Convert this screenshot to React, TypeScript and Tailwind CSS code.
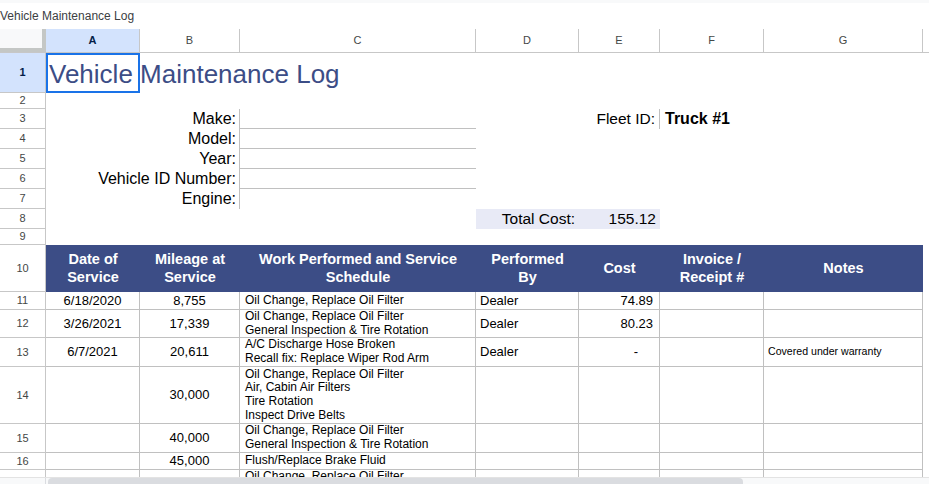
const font = { fontFamily: '"Liberation Sans", Arial, sans-serif' }

const colW = ['w-[94px]', 'w-[100px]', 'w-[236px]', 'w-[103px]', 'w-[81px]', 'w-[104px]', 'w-[159px]']
const letters = ['A', 'B', 'C', 'D', 'E', 'F', 'G']

interface LogRow {
  n: number
  h: string
  date?: string
  miles?: string
  work: string[]
  by?: string
  cost?: string
  notes?: string
}

const rows: LogRow[] = [
  { n: 11, h: 'h-[18px]', date: '6/18/2020', miles: '8,755', work: ['Oil Change, Replace Oil Filter'], by: 'Dealer', cost: '74.89' },
  {
    n: 12,
    h: 'h-[28px]',
    date: '3/26/2021',
    miles: '17,339',
    work: ['Oil Change, Replace Oil Filter', 'General Inspection & Tire Rotation'],
    by: 'Dealer',
    cost: '80.23'
  },
  {
    n: 13,
    h: 'h-[29px]',
    date: '6/7/2021',
    miles: '20,611',
    work: ['A/C Discharge Hose Broken', 'Recall fix: Replace Wiper Rod Arm'],
    by: 'Dealer',
    cost: '-',
    notes: 'Covered under warranty'
  },
  {
    n: 14,
    h: 'h-[57px]',
    miles: '30,000',
    work: ['Oil Change, Replace Oil Filter', 'Air, Cabin Air Filters', 'Tire Rotation', 'Inspect Drive Belts']
  },
  { n: 15, h: 'h-[29px]', miles: '40,000', work: ['Oil Change, Replace Oil Filter', 'General Inspection & Tire Rotation'] },
  { n: 16, h: 'h-[17px]', miles: '45,000', work: ['Flush/Replace Brake Fluid'] },
  { n: 17, h: 'h-[29px]', work: ['Oil Change, Replace Oil Filter', 'General Inspection & Tire Rotation'] }
]

function RowHead({ n, selected }: { n: number; selected?: boolean }) {
  return (
    <div
      className={
        selected
          ? 'flex w-[46px] shrink-0 items-center justify-center border-r border-b border-[#c7c7c7] bg-[#d3e3fd] text-[11px] font-bold text-[#041e49]'
          : 'flex w-[46px] shrink-0 items-center justify-center border-r border-b border-[#c7c7c7] bg-white text-[11px] text-[#444746]'
      }>
      {n}
    </div>
  )
}

function LabelRow({ n, label, underline, fleet }: { n: number; label: string; underline: boolean; fleet?: boolean }) {
  return (
    <div className="flex h-[20px]">
      <RowHead n={n} />
      <div className="flex w-[194px] items-center justify-end border-r border-[#c0c0c0] pr-[3px] text-[16px] text-black">
        {label}
      </div>
      <div className={underline ? 'w-[236px] border-b border-[#c0c0c0]' : 'w-[236px]'} />
      {fleet ? (
        <>
          <div className="flex w-[184px] items-center justify-end border-r border-[#c0c0c0] pr-[4px] text-[15.5px] text-black">
            Fleet ID:
          </div>
          <div className="flex items-center pl-[5px] text-[16px] font-bold text-black">Truck #1</div>
        </>
      ) : null}
    </div>
  )
}

export default function App() {
  return (
    <div className="h-[484px] w-[929px] overflow-hidden bg-white" style={font}>
      {/* title bar */}
      <div className="flex h-[29px] items-center border-t-[3px] border-[#f8f9fa] text-[12px] text-[#3c4043]">
        Vehicle Maintenance Log
      </div>

      {/* column letters */}
      <div className="flex h-[24px] border-b border-[#c7c7c7]">
        <div className="w-[46px] shrink-0 border-r-4 border-b-4 border-[#c4c7c5] bg-[#f8f9fa]" />
        {letters.map((l, i) => (
          <div
            key={l}
            className={
              i === 0
                ? `${colW[i]} flex shrink-0 items-center justify-center border-r border-[#c7c7c7] bg-[#d3e3fd] text-[11px] font-bold text-[#041e49]`
                : `${colW[i]} flex shrink-0 items-center justify-center border-r border-[#c7c7c7] text-[11px] text-[#444746]`
            }>
            {l}
          </div>
        ))}
        <div className="flex-1" />
      </div>

      <div className="h-[424px] overflow-hidden">
        {/* row 1 */}
        <div className="flex h-[40px]">
          <RowHead n={1} selected />
          <div className="flex w-[94px] shrink-0 items-center overflow-visible border-2 border-[#1a73e8] pt-[2px] pl-[1px]">
            <span className="text-[26px] leading-none whitespace-nowrap text-[#3c4d86]">Vehicle Maintenance Log</span>
          </div>
        </div>

        <div className="flex h-[16px]">
          <RowHead n={2} />
        </div>

        <LabelRow n={3} label="Make:" underline fleet />
        <LabelRow n={4} label="Model:" underline />
        <LabelRow n={5} label="Year:" underline />
        <LabelRow n={6} label="Vehicle ID Number:" underline />
        <LabelRow n={7} label="Engine:" underline={false} />

        {/* row 8 total */}
        <div className="flex h-[20px]">
          <RowHead n={8} />
          <div className="w-[430px] shrink-0" />
          <div className="flex w-[103px] shrink-0 items-center justify-end bg-[#e8eaf6] pr-[4px] text-[15.5px] text-black">
            Total Cost:
          </div>
          <div className="flex w-[81px] shrink-0 items-center justify-end bg-[#e8eaf6] pr-[4px] text-[15.5px] text-black">
            155.12
          </div>
        </div>

        <div className="flex h-[16px]">
          <RowHead n={9} />
        </div>

        {/* row 10 header */}
        <div className="flex h-[47px]">
          <RowHead n={10} />
          {[
            ['Date of', 'Service'],
            ['Mileage at', 'Service'],
            ['Work Performed and Service', 'Schedule'],
            ['Performed', 'By'],
            ['Cost'],
            ['Invoice /', 'Receipt #'],
            ['Notes']
          ].map((lines, i) => (
            <div
              key={i}
              className={`${colW[i]} flex shrink-0 flex-col items-center justify-center bg-[#3c4d86] text-center text-[14.5px] leading-[17.5px] font-bold text-white`}>
              {lines.map(t => (
                <span key={t}>{t}</span>
              ))}
            </div>
          ))}
        </div>

        {/* data rows */}
        {rows.map(r => (
          <div
            key={r.n}
            className={`flex ${r.h}`}>
            <RowHead n={r.n} />
            <div className="flex w-[94px] shrink-0 items-center justify-center border-r border-b border-[#c0c0c0] text-[13px] text-black">
              {r.date}
            </div>
            <div className="flex w-[100px] shrink-0 items-center justify-center border-r border-b border-[#c0c0c0] text-[13px] text-black">
              {r.miles}
            </div>
            <div className="flex w-[236px] shrink-0 flex-col justify-center border-r border-b border-[#c0c0c0] pl-[5px] text-[12px] leading-[13.7px] whitespace-nowrap text-black">
              {r.work.map(t => (
                <span key={t}>{t}</span>
              ))}
            </div>
            <div className="flex w-[103px] shrink-0 items-center border-r border-b border-[#c0c0c0] pl-[4px] text-[13px] text-black">
              {r.by}
            </div>
            <div
              className={
                r.cost === '-'
                  ? 'flex w-[81px] shrink-0 items-center justify-end border-r border-b border-[#c0c0c0] pr-[21px] text-[13px] text-black'
                  : 'flex w-[81px] shrink-0 items-center justify-end border-r border-b border-[#c0c0c0] pr-[6px] text-[13px] text-black'
              }>
              {r.cost}
            </div>
            <div className="w-[104px] shrink-0 border-r border-b border-[#c0c0c0]" />
            <div className="flex w-[159px] shrink-0 items-center border-r border-b border-[#c0c0c0] pl-[4px] text-[10.6px] text-black">
              {r.notes}
            </div>
          </div>
        ))}
      </div>

      {/* horizontal scrollbar */}
      <div className="flex h-[7px] border-t border-[#e3e3e3] bg-[#f8f9fa]">
        <div className="w-[46px] shrink-0 border-r border-[#dadce0]" />
        <div className="ml-[2px] w-[695px] rounded-t-[4px] bg-[#dadce0]" />
      </div>
    </div>
  )
}
